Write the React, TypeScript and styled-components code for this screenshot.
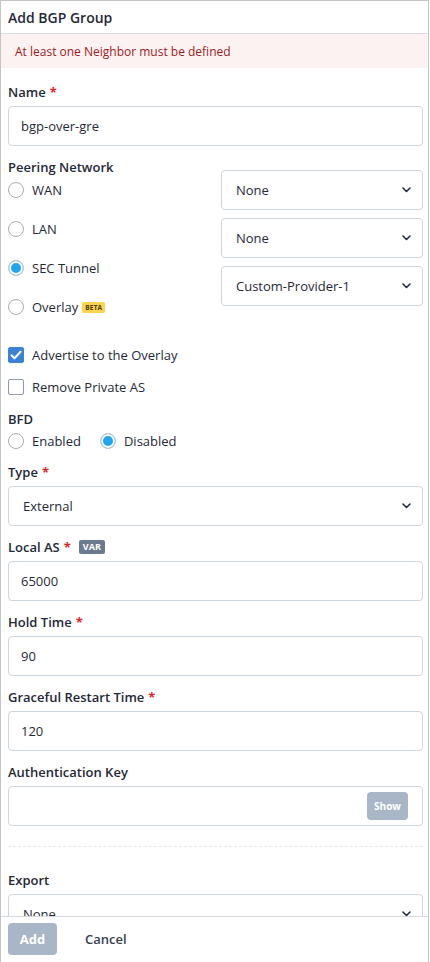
import styled, { createGlobalStyle } from 'styled-components';

const COLORS = {
  TEXT: '#1f2937',
  LABEL: '#1f2937',
  BORDER: '#cdd5e0',
  PANEL_BORDER: '#c4c4c4',
  REQUIRED: '#e02424',
  ERROR_BG: '#fdf2f2',
  ERROR_TEXT: '#9b1c1c',
  RADIO_ON: '#1ea7f0',
  CHECK_ON: '#3b82d6',
  MUTED_BTN: '#a9b6c7',
  BADGE_VAR: '#6b7a8f',
  BADGE_BETA: '#fcd34d',
};

const GlobalStyle = createGlobalStyle`
  * { box-sizing: border-box; }
  html, body { margin: 0; padding: 0; background: #fff; }
  body {
    font-family: "Open Sans", "Liberation Sans", sans-serif;
    color: ${COLORS.TEXT};
  }
`;

const Panel = styled.div`
  width: 429px;
  height: 962px;
  border: 1px solid ${COLORS.PANEL_BORDER};
  border-bottom: none;
  display: flex;
  flex-direction: column;
  overflow: hidden;
`;

const Header = styled.div`
  height: 33px;
  flex-shrink: 0;
  padding: 0 7px;
  display: flex;
  align-items: center;
  border-bottom: 1px solid #d9dde3;
  font-size: 14px;
  font-weight: 600;
  color: #1f2937;
`;

const ErrorBanner = styled.div`
  height: 34px;
  flex-shrink: 0;
  padding: 0 14px;
  display: flex;
  align-items: center;
  background: ${COLORS.ERROR_BG};
  color: ${COLORS.ERROR_TEXT};
  font-size: 12px;
`;

const Body = styled.div`
  flex: 1;
  min-height: 0;
  overflow: hidden;
  padding: 15px 5px 0 7px;
`;

const Field = styled.div<{ $gap?: number }>`
  margin-bottom: ${(p) => p.$gap ?? 12}px;
`;

const Label = styled.div`
  display: flex;
  align-items: center;
  gap: 4px;
  height: 18px;
  margin-bottom: 5px;
  font-size: 13px;
  font-weight: 600;
  color: ${COLORS.LABEL};
`;

const Required = styled.span`
  color: ${COLORS.REQUIRED};
  font-weight: 700;
`;

const VarBadge = styled.span`
  margin-left: 4px;
  padding: 0 4px;
  height: 14px;
  line-height: 14px;
  border-radius: 2px;
  background: ${COLORS.BADGE_VAR};
  color: #fff;
  font-size: 9px;
  font-weight: 700;
`;

const BetaBadge = styled.span`
  margin-left: -4px;
  padding: 0 3px;
  height: 11px;
  line-height: 11px;
  border-radius: 2px;
  background: ${COLORS.BADGE_BETA};
  color: #4b3a00;
  font-size: 6.5px;
  font-weight: 700;
  letter-spacing: 0.2px;
`;

const Box = styled.div`
  height: 40px;
  border: 1px solid ${COLORS.BORDER};
  border-radius: 4px;
  display: flex;
  align-items: center;
  padding: 0 12px;
  font-size: 13px;
  color: ${COLORS.TEXT};
  background: #fff;
`;

const SelectBox = styled(Box)`
  justify-content: space-between;
  padding: 0 11px 0 14px;
`;

const ShowButton = styled.span`
  margin-left: auto;
  margin-right: 2px;
  width: 41px;
  height: 28px;
  border-radius: 4px;
  background: ${COLORS.MUTED_BTN};
  color: #fff;
  font-size: 10px;
  font-weight: 700;
  display: flex;
  align-items: center;
  justify-content: center;
`;

const PeeringGrid = styled.div`
  display: grid;
  grid-template-columns: 1fr 202px;
  column-gap: 6px;
  margin-bottom: 28px;
`;

const RadioColumn = styled.div`
  display: flex;
  flex-direction: column;
`;

const RadioList = styled.div<{ $row?: boolean }>`
  display: flex;
  flex-direction: ${(p) => (p.$row ? 'row' : 'column')};
  gap: ${(p) => (p.$row ? 19 : 19)}px;
  margin-top: ${(p) => (p.$row ? -2 : -1)}px;
`;

const SelectColumn = styled.div`
  display: flex;
  flex-direction: column;
  gap: 8px;
  padding-top: 12px;
`;

const Option = styled.div`
  height: 20px;
  display: flex;
  align-items: center;
  gap: 8px;
  font-size: 13px;
  color: ${COLORS.TEXT};
`;

const RadioDot = styled.span<{ $on?: boolean }>`
  width: 16px;
  height: 16px;
  border-radius: 50%;
  border: 1px solid ${(p) => (p.$on ? '#b9c3d0' : '#a3adbb')};
  background: ${(p) => (p.$on ? COLORS.RADIO_ON : '#fff')};
  box-shadow: ${(p) => (p.$on ? 'inset 0 0 0 2px #fff' : 'none')};
  flex-shrink: 0;
`;

const CheckSquare = styled.span<{ $on?: boolean }>`
  width: 16px;
  height: 16px;
  border-radius: 2px;
  border: 1px solid ${(p) => (p.$on ? COLORS.CHECK_ON : '#8f99a8')};
  background: ${(p) => (p.$on ? COLORS.CHECK_ON : '#fff')};
  display: flex;
  align-items: center;
  justify-content: center;
  flex-shrink: 0;
`;

const CheckList = styled.div`
  display: flex;
  flex-direction: column;
  gap: 12px;
  margin-bottom: 13px;
`;

const Divider = styled.div`
  border-top: 1px dashed #e3e7ec;
  margin: 20px 0 24px;
`;

const Footer = styled.div`
  height: 46px;
  flex-shrink: 0;
  border-top: 1px solid #d4d9e0;
  padding: 6px 7px 0;
  display: flex;
  align-items: flex-start;
  gap: 28px;
  background: #fff;
`;

const AddButton = styled.span`
  width: 49px;
  height: 32px;
  border-radius: 4px;
  background: ${COLORS.MUTED_BTN};
  color: #fff;
  font-size: 13px;
  font-weight: 700;
  display: flex;
  align-items: center;
  justify-content: center;
`;

const CancelButton = styled.span`
  height: 32px;
  display: flex;
  align-items: center;
  font-size: 13px;
  font-weight: 600;
  color: #374151;
`;

const Chevron = () => (
  <svg width="9" height="6" viewBox="0 0 9 6" fill="none">
    <path d="M1 1l3.5 3.5L8 1" stroke="#1f2937" strokeWidth="1.5" strokeLinecap="round" strokeLinejoin="round" />
  </svg>
);

const Tick = () => (
  <svg width="12" height="10" viewBox="0 0 12 10" fill="none">
    <path d="M1.5 5.2l3 3 6-6.5" stroke="#fff" strokeWidth="2" strokeLinecap="round" strokeLinejoin="round" />
  </svg>
);

const Select = ({ value }: { value: string }) => (
  <SelectBox>
    <span>{value}</span>
    <Chevron />
  </SelectBox>
);

const Radio = ({ label, on, children }: { label: string; on?: boolean; children?: React.ReactNode }) => (
  <Option>
    <RadioDot $on={on} />
    <span>{label}</span>
    {children}
  </Option>
);

const Checkbox = ({ label, on }: { label: string; on?: boolean }) => (
  <Option>
    <CheckSquare $on={on}>{on && <Tick />}</CheckSquare>
    <span>{label}</span>
  </Option>
);

const TextField = ({ label, value, required, badge }: { label: string; value: string; required?: boolean; badge?: string }) => (
  <Field>
    <Label>
      {label}
      {required && <Required>*</Required>}
      {badge && <VarBadge>{badge}</VarBadge>}
    </Label>
    <Box>{value}</Box>
  </Field>
);

const App = () => (
  <>
    <GlobalStyle />
    <Panel>
      <Header>Add BGP Group</Header>
      <ErrorBanner>At least one Neighbor must be defined</ErrorBanner>
      <Body>
        <TextField label="Name" value="bgp-over-gre" required />

        <PeeringGrid>
          <RadioColumn>
            <Label>Peering Network</Label>
            <RadioList>
              <Radio label="WAN" />
              <Radio label="LAN" />
              <Radio label="SEC Tunnel" on />
              <Radio label="Overlay">
                <BetaBadge>BETA</BetaBadge>
              </Radio>
            </RadioList>
          </RadioColumn>
          <SelectColumn>
            <Select value="None" />
            <Select value="None" />
            <Select value="Custom-Provider-1" />
          </SelectColumn>
        </PeeringGrid>

        <CheckList>
          <Checkbox label="Advertise to the Overlay" on />
          <Checkbox label="Remove Private AS" />
        </CheckList>

        <Field>
          <Label>BFD</Label>
          <RadioList $row>
            <Radio label="Enabled" />
            <Radio label="Disabled" on />
          </RadioList>
        </Field>

        <Field>
          <Label>
            Type<Required>*</Required>
          </Label>
          <Select value="External" />
        </Field>

        <TextField label="Local AS" value="65000" required badge="VAR" />
        <TextField label="Hold Time" value="90" required />
        <TextField label="Graceful Restart Time" value="120" required />

        <Field $gap={0}>
          <Label>Authentication Key</Label>
          <Box>
            <ShowButton>Show</ShowButton>
          </Box>
        </Field>

        <Divider />

        <Field>
          <Label>Export</Label>
          <Select value="None" />
        </Field>
      </Body>
      <Footer>
        <AddButton>Add</AddButton>
        <CancelButton>Cancel</CancelButton>
      </Footer>
    </Panel>
  </>
);

export default App;
